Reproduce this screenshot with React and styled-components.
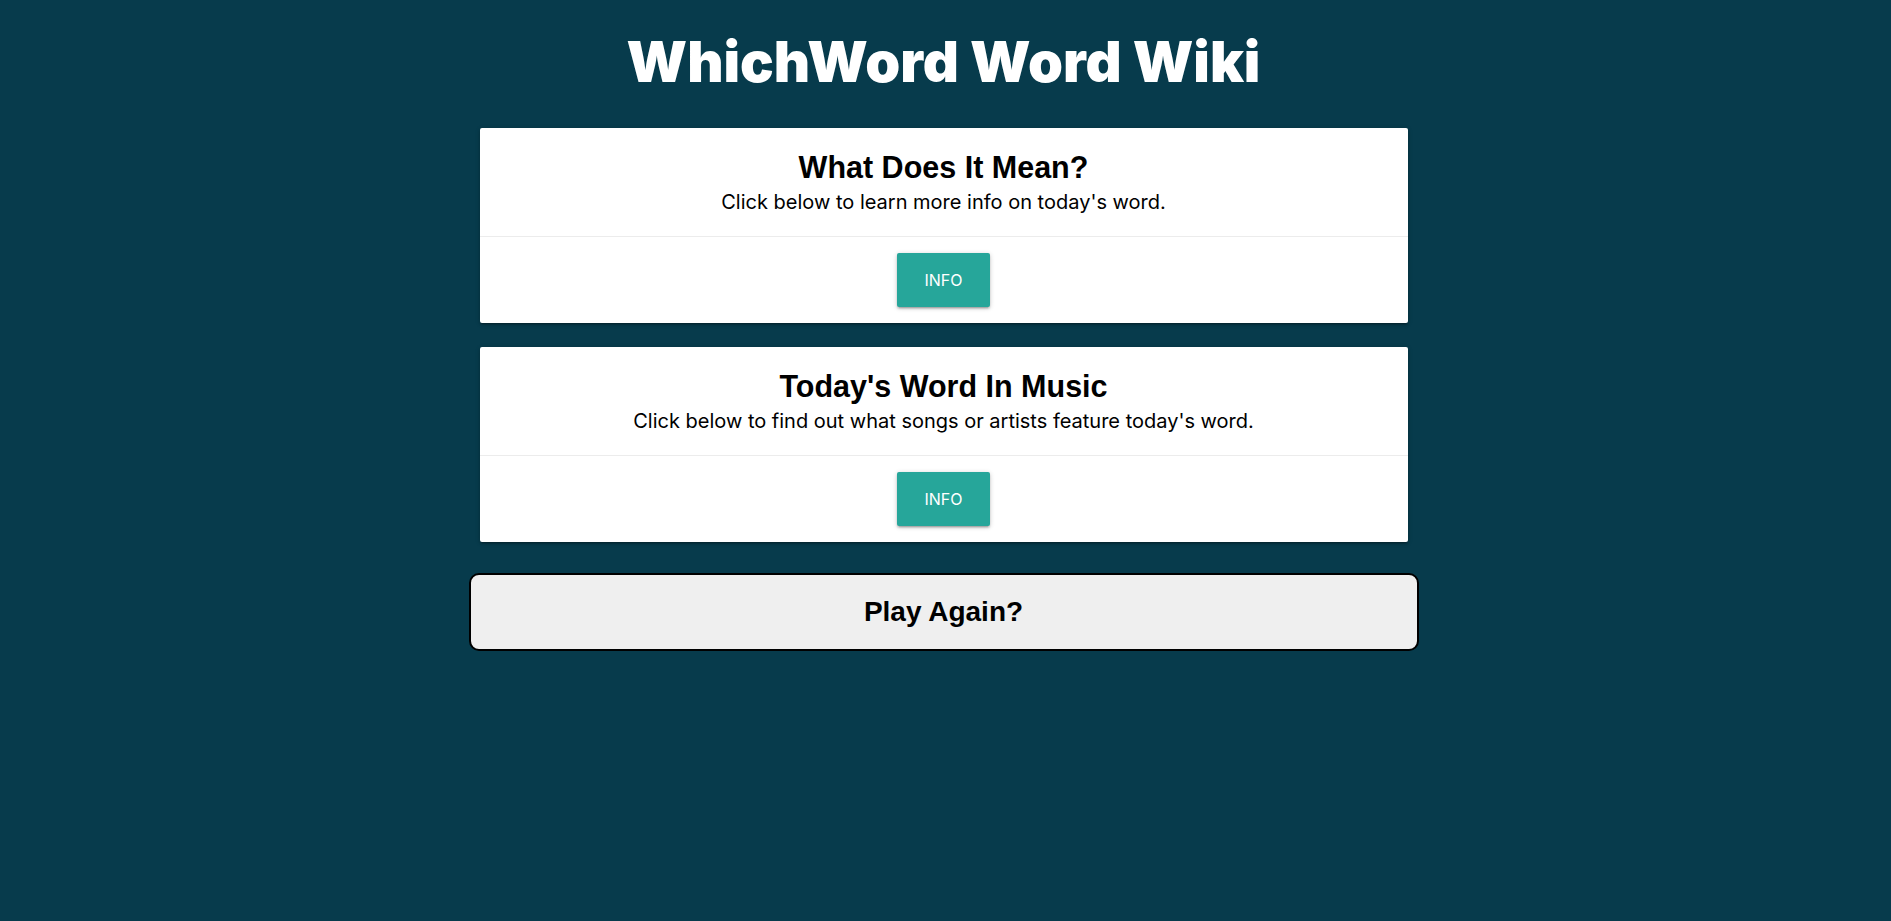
import React from "react";
import styled, { createGlobalStyle } from "styled-components";

const GlobalStyle = createGlobalStyle`
  html, body {
    margin: 0;
    padding: 0;
    background: #073b4c;
  }
  body {
    font-family: "Inter", "Liberation Sans", sans-serif;
    min-height: 921px;
  }
`;

const Page = styled.div`
  display: flex;
  flex-direction: column;
  align-items: center;
  padding: 34px 4px 40px 0;
`;

const Title = styled.h1`
  margin: 0 0 37px;
  font-family: "Inter", sans-serif;
  font-weight: 900;
  font-size: 56px;
  line-height: 57px;
  letter-spacing: 0;
  color: #ffffff;
  text-align: center;
`;

const Container = styled.div`
  width: 950px;
  display: flex;
  flex-direction: column;
`;

const Column = styled.div`
  padding: 0 11px;
  display: flex;
  flex-direction: column;
  gap: 24px;
`;

const Card = styled.section`
  background: #ffffff;
  border-radius: 2px;
  box-shadow: 0 2px 2px 0 rgba(0, 0, 0, 0.14), 0 3px 1px -2px rgba(0, 0, 0, 0.12),
    0 1px 5px 0 rgba(0, 0, 0, 0.2);
  display: flex;
  flex-direction: column;
`;

const CardContent = styled.div`
  padding: 22px 24px 22px;
  text-align: center;
  color: #000;
`;

const CardTitle = styled.h2`
  margin: 0;
  font-family: "Liberation Sans", Arial, sans-serif;
  font-weight: 700;
  font-size: 30.5px;
  line-height: 34px;
`;

const CardText = styled.p`
  margin: 6px 0 0;
  font-family: "Inter", sans-serif;
  font-size: 20px;
  line-height: 24px;
`;

const CardAction = styled.div`
  border-top: 1px solid rgba(160, 160, 160, 0.2);
  padding: 16px 24px;
  display: flex;
  justify-content: center;
`;

const InfoButton = styled.button`
  height: 54px;
  padding: 0 27px;
  border: none;
  border-radius: 2px;
  background: #26a69a;
  color: #ffffff;
  font-family: "Inter", "Roboto", sans-serif;
  font-size: 16px;
  letter-spacing: 0;
  text-transform: uppercase;
  cursor: pointer;
  box-shadow: 0 2px 2px 0 rgba(0, 0, 0, 0.14), 0 3px 1px -2px rgba(0, 0, 0, 0.12),
    0 1px 5px 0 rgba(0, 0, 0, 0.2);
`;

const PlayAgain = styled.button`
  margin-top: 31px;
  height: 78px;
  width: 100%;
  border: 2px solid #000;
  border-radius: 10px;
  background: #efefef;
  color: #000;
  font-family: "Liberation Sans", Arial, sans-serif;
  font-weight: 700;
  font-size: 28px;
  cursor: pointer;
`;

const cards = [
  {
    title: "What Does It Mean?",
    text: "Click below to learn more info on today's word.",
  },
  {
    title: "Today's Word In Music",
    text: "Click below to find out what songs or artists feature today's word.",
  },
];

export default function App() {
  return (
    <>
      <GlobalStyle />
      <Page>
        <Title>WhichWord Word Wiki</Title>
        <Container>
          <Column>
            {cards.map((c) => (
              <Card key={c.title}>
                <CardContent>
                  <CardTitle>{c.title}</CardTitle>
                  <CardText>{c.text}</CardText>
                </CardContent>
                <CardAction>
                  <InfoButton>Info</InfoButton>
                </CardAction>
              </Card>
            ))}
          </Column>
          <PlayAgain>Play Again?</PlayAgain>
        </Container>
      </Page>
    </>
  );
}
